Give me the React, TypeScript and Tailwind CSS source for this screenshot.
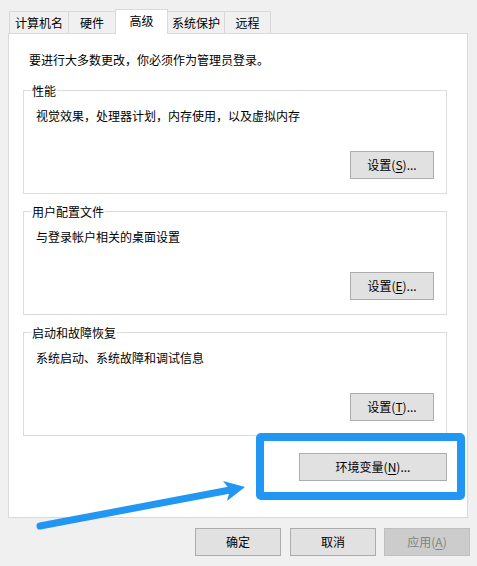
import React from "react"

const tabs = [
  { label: "计算机名", w: "w-[60px]" },
  { label: "硬件", w: "w-[48px]" },
  { label: "高级", w: "w-[53px]", active: true },
  { label: "系统保护", w: "w-[58px]" },
  { label: "远程", w: "w-[47px]" },
]

function Mnemonic({ text, k, tail = "" }: { text: string; k: string; tail?: string }) {
  return (
    <span>
      {text}(<span className="underline underline-offset-2">{k}</span>){tail}
    </span>
  )
}

function Group({ title, desc, mnemonic }: { title: string; desc: string; mnemonic: string }) {
  return (
    <div className="relative flex h-[104px] w-[424px] flex-col border border-[#dcdcdc]">
      <span className="absolute left-[7px] top-[-8px] bg-white px-[1px] leading-[16px]">{title}</span>
      <p className="ml-[12px] mt-[17px] leading-[16px]">{desc}</p>
      <button className="mr-[12px] mt-[27px] flex h-[28px] w-[84px] items-center justify-center self-end border border-[#adadad] bg-[#e1e1e1]">
        <Mnemonic text="设置" k={mnemonic} tail="..." />
      </button>
    </div>
  )
}

export default function App() {
  return (
    <div className="relative h-[566px] w-[477px] overflow-hidden bg-[#f0f0f0] font-['Noto_Sans_CJK_SC',sans-serif] text-[12px] text-black">
      {/* Tabs */}
      <div className="flex h-[33px] items-end pl-[9px] pt-[9px]">
        {tabs.map((t, i) =>
          t.active ? (
            <div
              key={t.label}
              className={`relative z-10 -mb-px -ml-px flex h-[25px] items-center justify-center border-l border-r border-t border-[#d9d9d9] bg-white pb-[2px] ${t.w}`}
            >
              {t.label}
            </div>
          ) : (
            <div
              key={t.label}
              className={`flex h-[22px] items-center justify-center border-l border-r border-t border-[#d9d9d9] bg-[#f0f0f0] ${i > 0 ? "-ml-px" : ""} ${t.w}`}
            >
              {t.label}
            </div>
          )
        )}
      </div>

      {/* Panel */}
      <div className="ml-[8px] h-[485px] w-[460px] border border-[#d9d9d9] bg-white">
        <p className="ml-[20px] mt-[18px] leading-[16px]">要进行大多数更改，你必须作为管理员登录。</p>
        <div className="mt-[22px] flex flex-col gap-[17px] pl-[14px]">
          <Group title="性能" desc="视觉效果，处理器计划，内存使用，以及虚拟内存" mnemonic="S" />
          <Group title="用户配置文件" desc="与登录帐户相关的桌面设置" mnemonic="E" />
          <Group title="启动和故障恢复" desc="系统启动、系统故障和调试信息" mnemonic="T" />
        </div>
        <div className="mt-[17px] flex w-[438px] justify-end">
          <button className="flex h-[28px] w-[148px] items-center justify-center border border-[#adadad] bg-[#e1e1e1]">
            <Mnemonic text="环境变量" k="N" tail="..." />
          </button>
        </div>
      </div>

      {/* Dialog buttons */}
      <div className="mt-[10px] flex pl-[195px]">
        <button className="flex h-[28px] w-[86px] items-center justify-center border border-[#adadad] bg-[#e1e1e1]">确定</button>
        <button className="ml-[9px] flex h-[28px] w-[86px] items-center justify-center border border-[#adadad] bg-[#e1e1e1]">取消</button>
        <button disabled className="ml-[8px] flex h-[28px] w-[86px] items-center justify-center border border-[#bfbfbf] bg-[#cccccc] text-[#838383]">
          <Mnemonic text="应用" k="A" />
        </button>
      </div>

      {/* Annotation: highlight box */}
      <div className="pointer-events-none absolute left-[256px] top-[433px] h-[67px] w-[209px] rounded-[5px] border-[8px] border-[#2196f3]" />

      {/* Annotation: arrow */}
      <svg className="pointer-events-none absolute left-0 top-0" width="477" height="566">
        <line x1="40" y1="526" x2="230" y2="490" stroke="#2196f3" strokeWidth="7" strokeLinecap="round" />
        <polygon points="245,487 223,481 230,490 227,501" fill="#2196f3" />
      </svg>
    </div>
  )
}
